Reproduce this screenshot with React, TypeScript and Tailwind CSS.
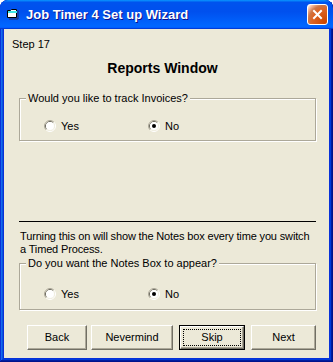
import React from "react";

function Radio({ checked }: { checked: boolean }) {
  return (
    <svg width="12" height="12" viewBox="0 0 12 12" className="shrink-0">
      <path d="M2.11 9.89A5.5 5.5 0 0 1 9.89 2.11" stroke="#aca899" fill="none" />
      <path d="M9.89 2.11A5.5 5.5 0 0 1 2.11 9.89" stroke="#ffffff" fill="none" />
      <path d="M2.82 9.18A4.5 4.5 0 0 1 9.18 2.82" stroke="#716f64" fill="none" />
      <path d="M9.18 2.82A4.5 4.5 0 0 1 2.82 9.18" stroke="#f1efe2" fill="none" />
      <circle cx="6" cy="6" r="4" fill="#ffffff" />
      {checked && <circle cx="6" cy="6" r="2" fill="#000000" />}
    </svg>
  );
}

function RadioRow({ noChecked }: { noChecked: boolean }) {
  return (
    <div className="flex items-center h-[12px]">
      <div className="ml-[24px] w-[104px] flex items-center gap-[5px]">
        <Radio checked={!noChecked} />
        <span className="leading-[13px]">Yes</span>
      </div>
      <div className="flex items-center gap-[5px]">
        <Radio checked={noChecked} />
        <span className="leading-[13px]">No</span>
      </div>
    </div>
  );
}

export default function App() {
  return (
    <div className="w-[333px] h-[362px] bg-white font-['Liberation_Sans',Arial,sans-serif] text-[11px] text-black">
      <div className="w-[333px] h-[362px] flex flex-col rounded-t-[8px] overflow-hidden bg-[#0831d9] shadow-[inset_-1px_-1px_#00138c,inset_1px_1px_#0831d9,inset_-2px_-2px_#001ea0,inset_2px_2px_#166aee,inset_-3px_-3px_#003bda,inset_3px_3px_#0855dd]">
        {/* Title bar */}
        <div className="h-[29px] shrink-0 flex items-center rounded-t-[8px] bg-[linear-gradient(180deg,#0997ff,#0053ee_8%,#0050ee_40%,#06f_88%,#06f_93%,#005bff_95%,#003dd7_96%,#003dd7)] pl-[7px] pr-[5px]">
          <svg width="12" height="11" viewBox="0 0 12 11" className="shrink-0">
            <path d="M0.5 1.5h3l1-1h5v8h-9z" fill="#ffffff" stroke="#000000" />
            <rect x="1" y="2" width="9" height="2" fill="#3ee6e6" />
            <path d="M11 1.5v8.5H2" stroke="#2a2a5a" fill="none" />
          </svg>
          <span className="ml-[7px] text-white font-bold text-[13px] leading-[16px] [text-shadow:1px_1px_#0f1089]">
            Job Timer 4 Set up Wizard
          </span>
          <div className="ml-auto w-[21px] h-[21px] rounded-[3px] border border-white bg-[radial-gradient(circle_at_90%_90%,#cc4600_0%,#dc6527_55%,#cd7546_70%,#ffccb2_90%,#ffffff_100%)] flex items-center justify-center">
            <svg width="11" height="11" viewBox="0 0 11 11">
              <path d="M2 2L9 9M9 2L2 9" stroke="#ffffff" strokeWidth="2" strokeLinecap="square" />
            </svg>
          </div>
        </div>

        {/* Client area */}
        <div className="mx-[4px] mb-[4px] flex-1 bg-[#ece9d8] flex flex-col pt-[9px]">
          <div className="ml-[8px] leading-[13px]">Step 17</div>
          <div className="mt-[9px] ml-[10px] w-[297px] text-center font-bold text-[14px] leading-[16px]">
            Reports Window
          </div>

          <div className="relative mt-[22px] ml-[15px] w-[297px] border border-[#aca899] shadow-[inset_1px_1px_#ffffff,1px_1px_#ffffff] pt-[21px] pb-[8px]">
            <span className="absolute left-[6px] top-[-7px] px-[2px] bg-[#ece9d8] leading-[13px]">
              Would you like to track Invoices?
            </span>
            <RadioRow noChecked={true} />
          </div>

          <div className="mt-[80px] ml-[15px] w-[297px] h-px bg-black" />

          <p className="mt-[8px] ml-[16px] leading-[13px] whitespace-nowrap tracking-[-0.15px]">
            Turning this on will show the Notes box every time you switch
            <br />
            a Timed Process.
          </p>

          <div className="relative mt-[7px] ml-[15px] w-[297px] border border-[#aca899] shadow-[inset_1px_1px_#ffffff,1px_1px_#ffffff] pt-[24px] pb-[9px]">
            <span className="absolute left-[6px] top-[-7px] px-[2px] bg-[#ece9d8] leading-[13px]">
              Do you want the Notes Box to appear?
            </span>
            <RadioRow noChecked={true} />
          </div>

          <div className="mt-[15px] ml-[23px] flex">
            <button className="w-[60px] h-[25px] bg-[#ece9d8] border border-t-white border-l-white border-r-[#716f64] border-b-[#716f64] shadow-[inset_-1px_-1px_#aca899] flex items-center justify-center leading-[13px]">
              Back
            </button>
            <button className="ml-[4px] w-[82px] h-[25px] bg-[#ece9d8] border border-t-white border-l-white border-r-[#716f64] border-b-[#716f64] shadow-[inset_-1px_-1px_#aca899] flex items-center justify-center leading-[13px]">
              Nevermind
            </button>
            <button className="ml-[6px] w-[66px] h-[25px] bg-[#ece9d8] border border-black p-0">
              <div className="w-full h-full border border-t-white border-l-white border-r-[#716f64] border-b-[#716f64] shadow-[inset_-1px_-1px_#aca899] p-[2px]">
                <div className="w-full h-full border border-dotted border-black flex items-center justify-center leading-[13px]">
                  Skip
                </div>
              </div>
            </button>
            <button className="ml-[6px] w-[65px] h-[25px] bg-[#ece9d8] border border-t-white border-l-white border-r-[#716f64] border-b-[#716f64] shadow-[inset_-1px_-1px_#aca899] flex items-center justify-center leading-[13px]">
              Next
            </button>
          </div>
        </div>
      </div>
    </div>
  );
}
